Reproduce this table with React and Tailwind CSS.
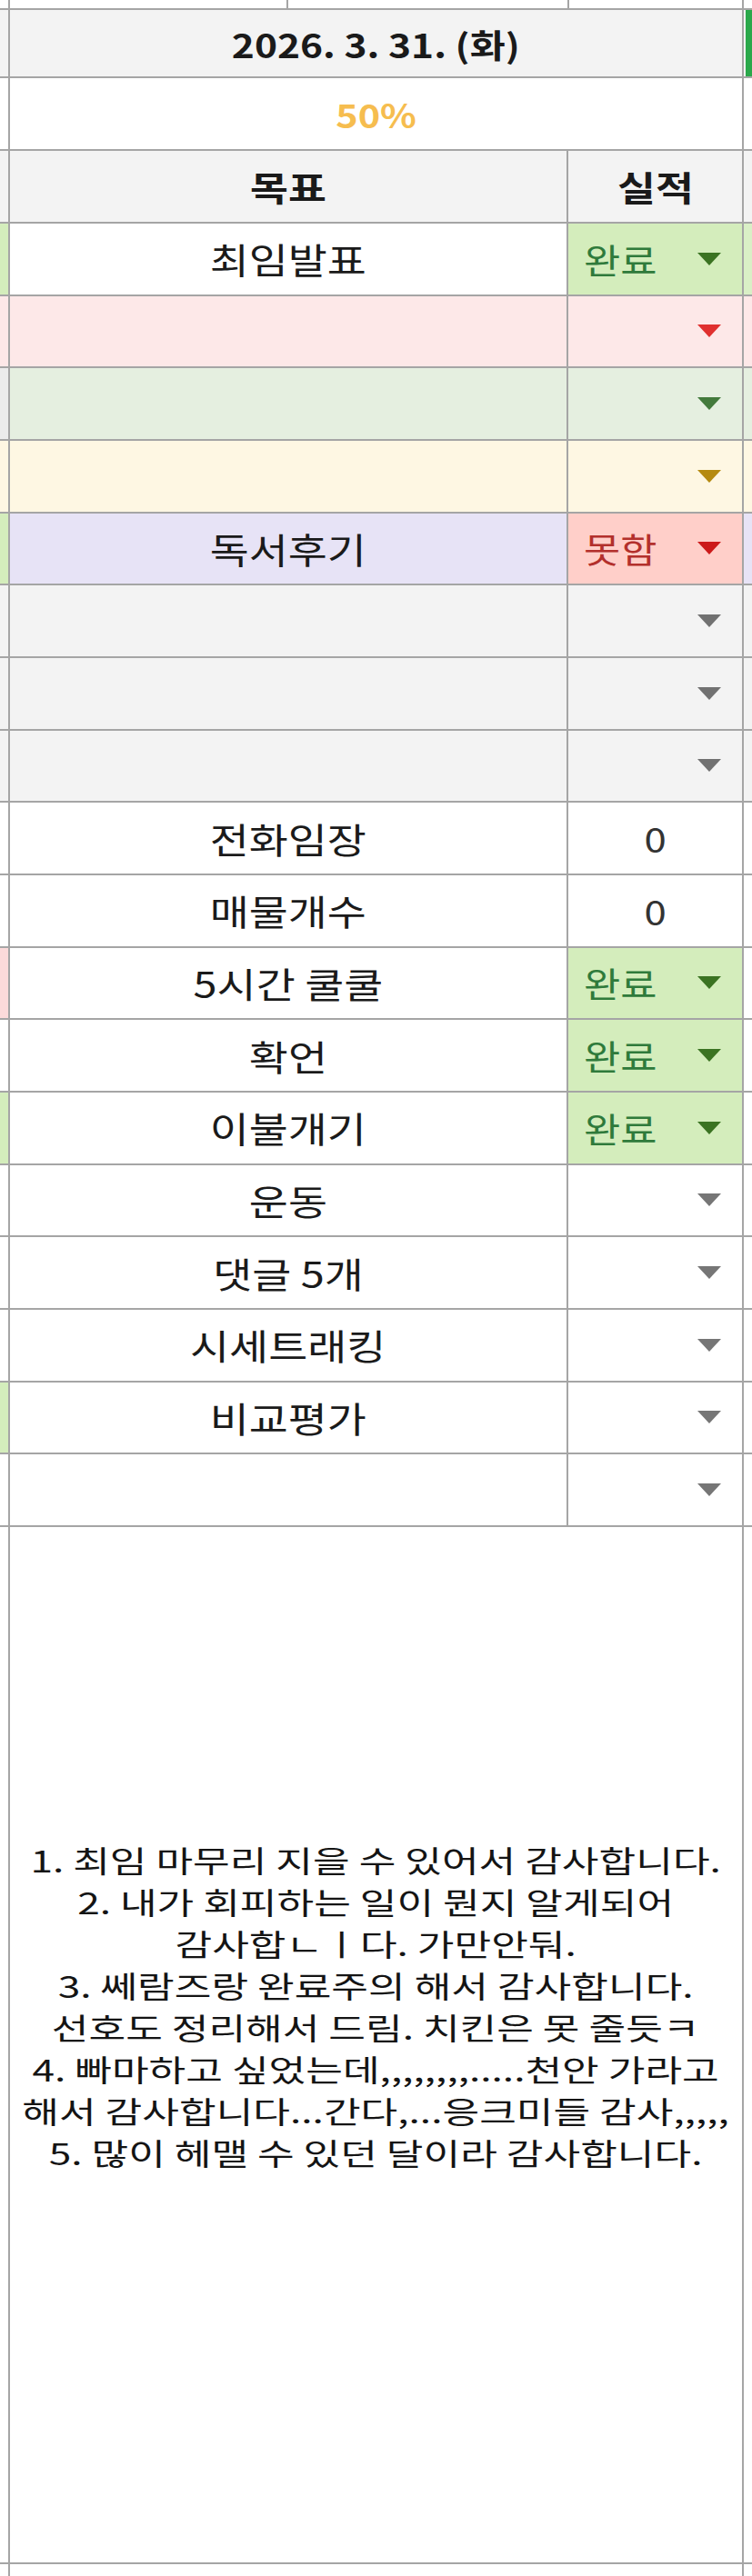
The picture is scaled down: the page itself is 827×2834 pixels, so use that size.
import React from 'react';

const LINE = 'border-[#a5a5a5]';

// 목표 / 실적 rows, top to bottom
const rows = [
    { goal: '최임발표', kind: 'done', bg: 'bg-white', left: 'bg-[#d4edbc]', right: 'bg-[#d9efc6]' },
    { goal: '', kind: 'arrow', bg: 'bg-[#fde8e8]', cell: 'bg-[#fde8e8]', arrow: '#e0302f', left: 'bg-[#fde8e8]', right: 'bg-[#fde8e8]' },
    { goal: '', kind: 'arrow', bg: 'bg-[#e5efe0]', cell: 'bg-[#e5efe0]', arrow: '#437a3c', left: 'bg-[#ebebeb]', right: 'bg-[#e5efe0]' },
    { goal: '', kind: 'arrow', bg: 'bg-[#fef7e3]', cell: 'bg-[#fef7e3]', arrow: '#b58a10', left: 'bg-[#fef7e3]', right: 'bg-[#fef7e3]' },
    { goal: '독서후기', kind: 'fail', bg: 'bg-[#e7e3f6]', left: 'bg-[#d4edbc]', right: 'bg-[#e7e3f6]' },
    { goal: '', kind: 'arrow', bg: 'bg-[#f3f3f3]', cell: 'bg-[#f3f3f3]', arrow: '#717171', left: 'bg-[#f3f3f3]', right: 'bg-[#f3f3f3]' },
    { goal: '', kind: 'arrow', bg: 'bg-[#f3f3f3]', cell: 'bg-[#f3f3f3]', arrow: '#717171', left: 'bg-[#f3f3f3]', right: 'bg-[#f3f3f3]' },
    { goal: '', kind: 'arrow', bg: 'bg-[#f3f3f3]', cell: 'bg-[#f3f3f3]', arrow: '#717171', left: 'bg-[#f3f3f3]', right: 'bg-[#f3f3f3]' },
    { goal: '전화임장', kind: 'num', value: '0', bg: 'bg-white', left: 'bg-white', right: 'bg-white' },
    { goal: '매물개수', kind: 'num', value: '0', bg: 'bg-white', left: 'bg-white', right: 'bg-white' },
    { goal: '5시간 쿨쿨', kind: 'done', bg: 'bg-white', left: 'bg-[#fcdada]', right: 'bg-white' },
    { goal: '확언', kind: 'done', bg: 'bg-white', left: 'bg-white', right: 'bg-white' },
    { goal: '이불개기', kind: 'done', bg: 'bg-white', left: 'bg-[#d4edbc]', right: 'bg-white' },
    { goal: '운동', kind: 'arrow', bg: 'bg-white', cell: 'bg-white', arrow: '#767676', left: 'bg-white', right: 'bg-white' },
    { goal: '댓글 5개', kind: 'arrow', bg: 'bg-white', cell: 'bg-white', arrow: '#767676', left: 'bg-white', right: 'bg-white' },
    { goal: '시세트래킹', kind: 'arrow', bg: 'bg-white', cell: 'bg-white', arrow: '#767676', left: 'bg-white', right: 'bg-white' },
    { goal: '비교평가', kind: 'arrow', bg: 'bg-white', cell: 'bg-white', arrow: '#767676', left: 'bg-[#d4edbc]', right: 'bg-white' },
    { goal: '', kind: 'arrow', bg: 'bg-white', cell: 'bg-white', arrow: '#767676', left: 'bg-white', right: 'bg-white' },
];

const notes = [
    '1. 최임 마무리 지을 수 있어서 감사합니다.',
    '2. 내가 회피하는 일이 뭔지 알게되어',
    '감사합ㄴㅣ다. 가만안둬.',
    '3. 쎄람즈랑 완료주의 해서 감사합니다.',
    '선호도 정리해서 드림. 치킨은 못 줄듯ㅋ',
    '4. 빠마하고 싶었는데,,,,,,,,.....천안 가라고',
    '해서 감사합니다...간다,...응크미들 감사,,,,,',
    '5. 많이 헤맬 수 있던 달이라 감사합니다.',
];

function Arrow({ color }) {
    return (
        <svg width="26" height="14" viewBox="0 0 26 14" className="shrink-0">
            <path d="M0 0H26L13 14Z" fill={color} />
        </svg>
    );
}

function Status({ row }) {
    if (row.kind === 'done') {
        return (
            <div className="w-[193px] h-full border-r-2 border-[#a5a5a5] bg-[#d4edbc] flex items-center justify-between pl-[17px] pr-[23px]">
                <span className="inline-block text-[38px] text-[#2f7a3b] scale-x-[1.15] origin-left">완료</span>
                <Arrow color="#3b7322" />
            </div>
        );
    }
    if (row.kind === 'fail') {
        return (
            <div className="w-[193px] h-full border-r-2 border-[#a5a5a5] bg-[#ffcfc9] flex items-center justify-between pl-[17px] pr-[23px]">
                <span className="inline-block text-[38px] text-[#b3302c] scale-x-[1.15] origin-left">못함</span>
                <Arrow color="#cc1a1a" />
            </div>
        );
    }
    if (row.kind === 'num') {
        return (
            <div className="w-[193px] h-full border-r-2 border-[#a5a5a5] bg-white flex items-center justify-center">
                <span className="inline-block text-[38px] text-[#333] scale-x-[1.15]">{row.value}</span>
            </div>
        );
    }
    return (
        <div className={`w-[193px] h-full border-r-2 border-[#a5a5a5] flex items-center justify-end pr-[23px] ${row.cell}`}>
            <Arrow color={row.arrow} />
        </div>
    );
}

export default function App() {
    return (
        <div className="w-[827px] h-[2834px] overflow-hidden bg-white font-['Noto_Sans_CJK_KR','Noto_Sans',sans-serif] text-[#1a1a1a] leading-none">
            {/* 위쪽 잘린 행 */}
            <div className={`flex h-[11px] border-b-2 ${LINE}`}>
                <div className="w-[9px]" />
                <div className={`w-[306px] border-l-2 ${LINE}`} />
                <div className={`w-[309px] border-l-2 ${LINE}`} />
                <div className={`w-[194px] border-l-2 border-r-2 ${LINE}`} />
            </div>

            {/* 날짜 */}
            <div className={`flex h-[75px] border-b-2 ${LINE}`}>
                <div className="w-[9px] bg-[#f3f3f3]" />
                <div className={`w-[809px] border-l-2 border-r-2 ${LINE} bg-[#f3f3f3] flex items-center justify-center`}>
                    <span className="inline-block text-[36px] font-bold scale-x-[1.18]">2026. 3. 31. (화)</span>
                </div>
                <div className="flex-1 pl-[2px] bg-[#f3f3f3]">
                    <div className="h-full bg-[#2aa84a]" />
                </div>
            </div>

            {/* 달성률 */}
            <div className={`flex h-[80px] border-b-2 ${LINE}`}>
                <div className="w-[9px]" />
                <div className={`w-[809px] border-l-2 border-r-2 ${LINE} flex items-center justify-center`}>
                    <span className="inline-block text-[36px] font-bold text-[#f6bd4f] scale-x-[1.15]">50%</span>
                </div>
                <div className="flex-1" />
            </div>

            {/* 헤더 */}
            <div className={`flex h-[80px] border-b-2 ${LINE} bg-[#f3f3f3]`}>
                <div className="w-[9px]" />
                <div className={`w-[616px] border-l-2 border-r-2 ${LINE} flex items-center justify-center`}>
                    <span className="inline-block text-[38px] font-bold scale-x-[1.2]">목표</span>
                </div>
                <div className={`w-[193px] border-r-2 ${LINE} flex items-center justify-center`}>
                    <span className="inline-block text-[38px] font-bold scale-x-[1.2]">실적</span>
                </div>
                <div className="flex-1" />
            </div>

            {rows.map((row, i) => (
                <div key={i} className={`flex h-[79.67px] border-b-2 ${LINE}`}>
                    <div className={`w-[9px] ${row.left}`} />
                    <div className={`w-[616px] h-full border-l-2 border-r-2 ${LINE} ${row.bg} flex items-center justify-center`}>
                        <span className="inline-block text-[39px] scale-x-[1.2]">{row.goal}</span>
                    </div>
                    <Status row={row} />
                    <div className={`flex-1 ${row.right}`} />
                </div>
            ))}

            {/* 감사일기 */}
            <div className={`flex h-[1141px] border-b-2 ${LINE}`}>
                <div className="w-[9px]" />
                <div className={`w-[809px] border-l-2 border-r-2 ${LINE} flex items-center justify-center pb-[84px]`}>
                    <div className="text-[33px] leading-[46px] text-center text-[#141414] scale-x-[1.34] whitespace-nowrap">
                        {notes.map((line, i) => <div key={i}>{line}</div>)}
                    </div>
                </div>
                <div className="flex-1" />
            </div>

            <div className="flex h-[13px]">
                <div className="w-[9px]" />
                <div className={`w-[809px] border-l-2 border-r-2 ${LINE}`} />
            </div>
        </div>
    );
}
